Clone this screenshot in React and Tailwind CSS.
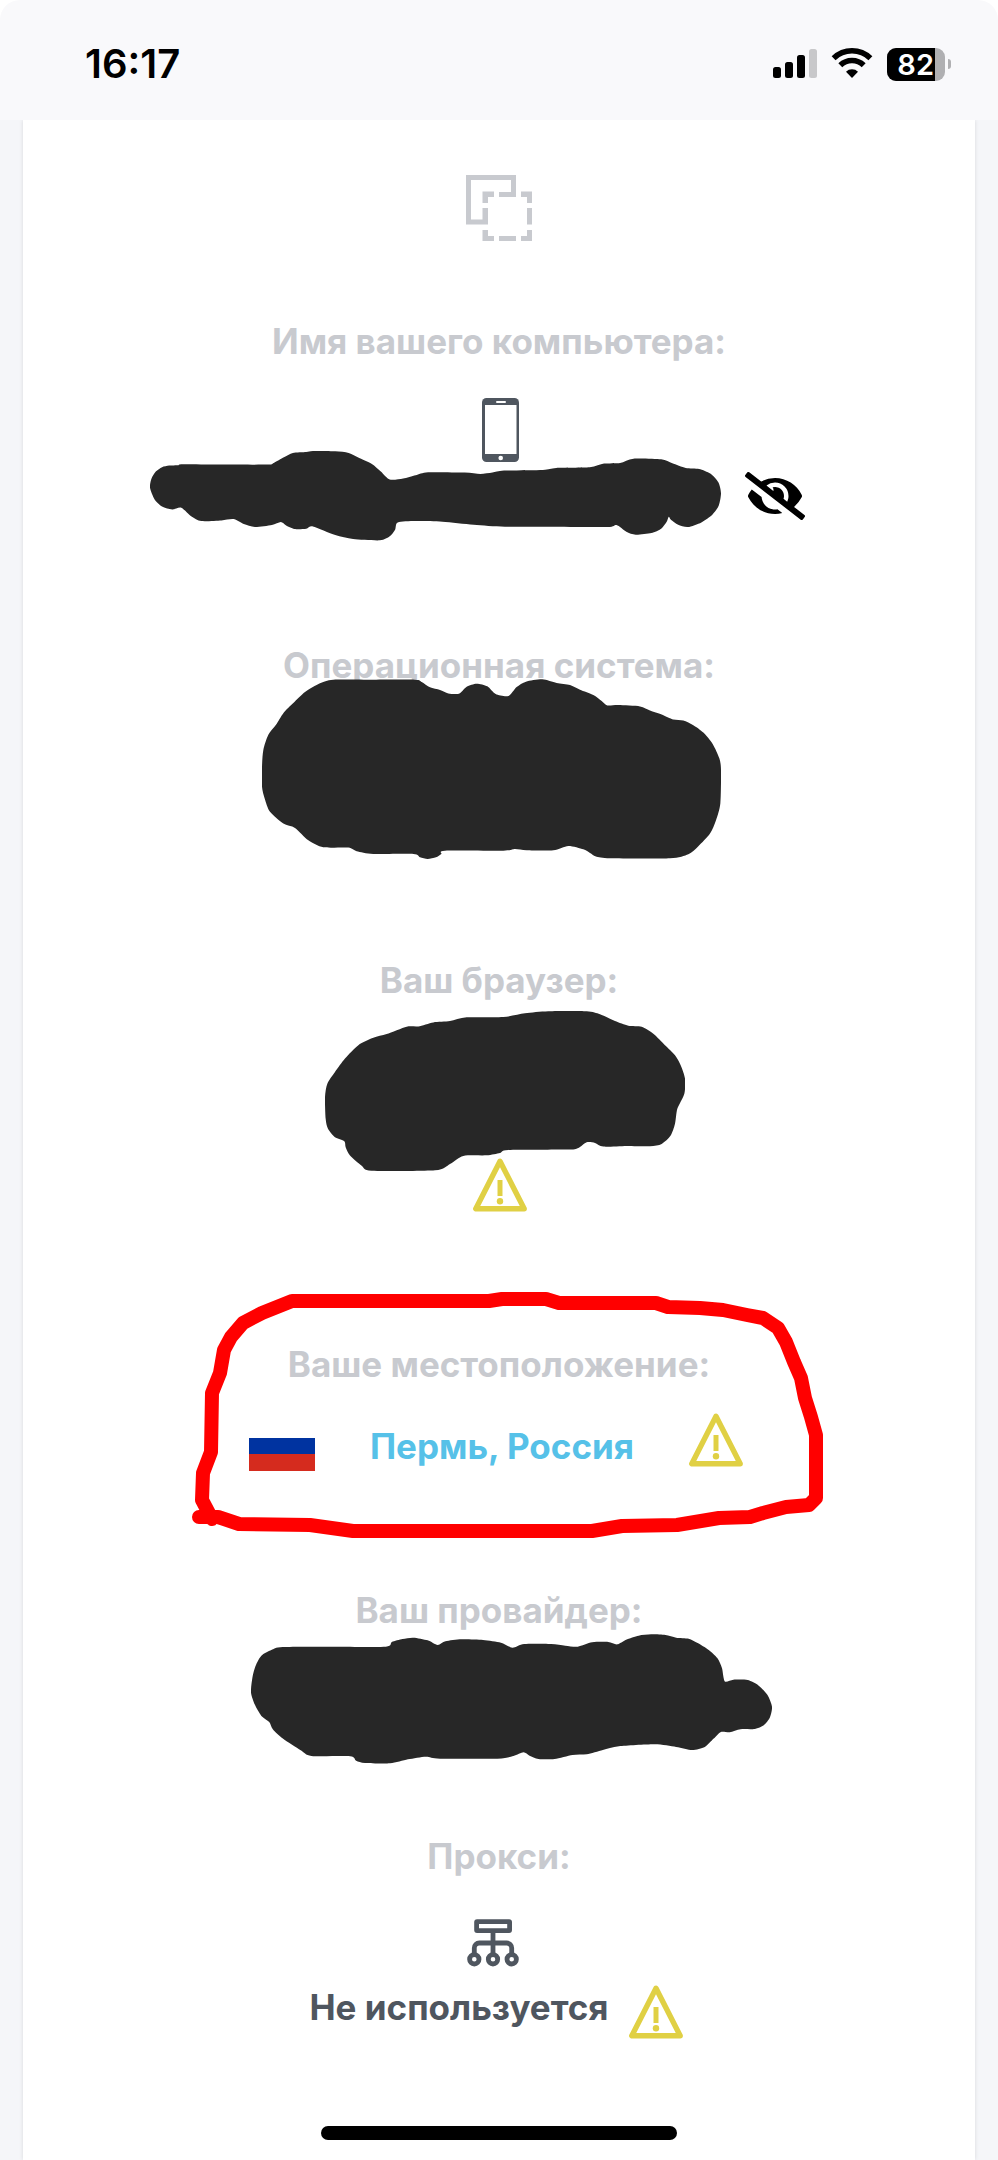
import { FaEyeSlash } from "react-icons/fa";

// Builds a closed smooth curve through a list of points.
function smooth(points) {
  const n = points.length;
  let d = `M${points[0][0]} ${points[0][1]}`;
  for (let i = 0; i < n; i++) {
    const p0 = points[(i - 1 + n) % n];
    const p1 = points[i];
    const p2 = points[(i + 1) % n];
    const p3 = points[(i + 2) % n];
    d += `C${p1[0] + (p2[0] - p0[0]) / 8} ${p1[1] + (p2[1] - p0[1]) / 8} ${p2[0] - (p3[0] - p1[0]) / 8} ${p2[1] - (p3[1] - p1[1]) / 8} ${p2[0]} ${p2[1]}`;
  }
  return d + "Z";
}

const nameMark = [
  [45, 532], [48, 505], [58, 483], [72, 470], [88, 465], [108, 464], [118, 461], [200, 462], [308, 462], [322, 457], [345, 440], [365, 427],
  [395, 424], [410, 421], [460, 422], [490, 427], [515, 443], [542, 460], [562, 483], [582, 507], [612, 504], [640, 494], [668, 485],
  [750, 486], [785, 490], [812, 486], [838, 480], [925, 478], [955, 472], [1030, 470], [1062, 459], [1098, 457], [1128, 444],
  [1190, 446], [1215, 458], [1245, 472], [1275, 475], [1300, 489], [1318, 515], [1324, 548], [1319, 585], [1305, 612],
  [1280, 636], [1250, 650], [1228, 643], [1212, 628], [1207, 619], [1202, 635], [1190, 655], [1168, 668], [1133, 673], [1112, 664], [1090, 644],
  [1070, 650], [950, 649], [840, 649], [770, 643], [700, 634], [640, 632], [600, 636], [594, 658], [582, 678], [560, 690],
  [500, 686], [460, 674], [410, 648], [395, 655], [370, 656], [350, 645], [338, 635], [318, 644], [280, 650], [255, 641],
  [232, 626], [205, 630], [160, 632], [138, 618], [115, 592], [95, 597], [72, 588], [55, 566],
];

const systemMark = [
  [66, 410], [70, 360], [85, 315], [108, 285], [130, 250], [160, 220], [195, 187], [240, 161], [280, 150], [400, 150], [525, 150],
  [545, 157], [570, 173], [600, 181], [625, 191], [657, 192], [680, 171], [710, 162], [742, 170], [767, 193], [805, 199],
  [830, 172], [858, 156], [907, 149], [950, 160], [990, 166], [1020, 180], [1060, 196], [1085, 214], [1102, 227],
  [1135, 226], [1200, 230], [1230, 242], [1265, 254], [1300, 269], [1330, 272], [1360, 286], [1390, 308], [1418, 342], [1438, 385],
  [1443, 420], [1441, 520], [1428, 570], [1410, 610], [1375, 648], [1345, 672], [1290, 684], [1120, 684], [1070, 679],
  [1050, 668], [1030, 657], [985, 647], [940, 660], [860, 660], [825, 656], [790, 661], [615, 661], [604, 671], [588, 681], [563, 686],
  [540, 681], [520, 671], [400, 671], [350, 663], [325, 652], [250, 651], [205, 630], [165, 593], [130, 580], [90, 545], [74, 505], [66, 470],
];

const browserMark = [
  [75, 440], [82, 400], [105, 365], [135, 325], [175, 285], [220, 263], [260, 252], [320, 230], [355, 229], [400, 217],
  [450, 213], [500, 202], [610, 201], [675, 190], [745, 184], [860, 184], [900, 193], [945, 213], [985, 227], [1025, 230],
  [1060, 251], [1095, 285], [1125, 315], [1142, 345], [1155, 385], [1153, 430], [1132, 475], [1125, 520], [1112, 555],
  [1085, 580], [1050, 587], [980, 586], [910, 588], [885, 577], [860, 575], [835, 592], [805, 597], [625, 598], [600, 607],
  [560, 614], [490, 616], [450, 640], [405, 659], [215, 660], [185, 645], [150, 615], [137, 590], [133, 572], [105, 560],
  [84, 535], [77, 505],
];

const providerMark = [
  [61, 335], [65, 290], [74, 255], [90, 225], [118, 208], [150, 199], [300, 198], [438, 198], [455, 184], [485, 175], [515, 171],
  [555, 179], [583, 193], [605, 182], [650, 176], [710, 178], [760, 186], [792, 201], [825, 190], [900, 190], [940, 195],
  [975, 198], [1015, 185], [1060, 184], [1085, 191], [1110, 177], [1145, 165], [1180, 161], [1220, 163], [1250, 171], [1285, 174],
  [1310, 187], [1340, 207], [1365, 232], [1378, 262], [1386, 302], [1410, 297], [1450, 298], [1480, 314], [1505, 342],
  [1518, 378], [1512, 410], [1495, 433], [1470, 444], [1430, 445], [1400, 454], [1375, 453], [1355, 473], [1330, 498],
  [1295, 507], [1250, 498], [1190, 490], [1090, 496], [1045, 507], [1000, 520], [960, 522], [910, 534], [865, 534],
  [840, 524], [823, 514], [795, 525], [750, 533], [590, 533], [550, 527], [500, 535], [450, 547], [380, 546], [355, 539],
  [338, 526], [230, 525], [200, 508], [150, 473], [122, 445], [112, 423], [90, 405], [72, 372],
];

function Mark({ points, box, className }) {
  return (
    <svg viewBox={box} preserveAspectRatio="none" className={`relative z-10 shrink-0 fill-[#272727] ${className}`} aria-hidden="true">
      <path d={smooth(points)} />
    </svg>
  );
}

function Label({ children }) {
  return <h2 className="text-[35px] leading-[40px] font-bold text-[#c8cacf]">{children}</h2>;
}

function Section({ label, className, children }) {
  return (
    <section className={`relative flex w-full flex-col items-center ${className}`}>
      <Label>{label}</Label>
      {children}
    </section>
  );
}

function Warning({ className = "" }) {
  return (
    <svg viewBox="0 0 54 54" className={`h-[54px] w-[54px] shrink-0 ${className}`} role="img" aria-label="Внимание">
      <path d="M27 3.2 2.8 50.8H51.2Z" fill="none" stroke="#e0d044" strokeWidth="5.4" strokeLinejoin="round" />
      <path d="M24.5 22h5v16h-5z" fill="#e0d044" />
      <circle cx="27" cy="43.3" r="3.2" fill="#e0d044" />
    </svg>
  );
}

function CopyIcon() {
  return (
    <svg viewBox="0 0 66 66" className="h-[66px] w-[66px] fill-[#c8cacf]" aria-hidden="true">
      <path d="M0 0H50V22H33V17H45V5H5V44.500H16.500V33H22V49.500H0Z" />
      <path d="M16.500 16.500H28V22H22V28H16.500ZM55 16.500H66V28H61V22H55ZM61 33H66V49.500H61ZM61 55H66V66H55V61H61ZM33 61H50V66H33ZM16.500 55H22V61H28V66H16.500Z" />
    </svg>
  );
}

function PhoneIcon() {
  return (
    <svg viewBox="0 0 37 64" className="h-[64px] w-[37px] shrink-0" aria-hidden="true">
      <rect width="37" height="64" rx="4.500" fill="#4f565f" />
      <rect x="3" y="7" width="31.500" height="49" fill="#fff" />
      <rect x="14" y="3" width="10" height="2" rx="1" fill="#fff" />
      <circle cx="18.700" cy="60" r="2.300" fill="#fff" />
    </svg>
  );
}

function ProxyIcon() {
  return (
    <svg viewBox="0 0 52 48" className="h-[48px] w-[52px]" fill="none" stroke="#4f565f" aria-hidden="true">
      <g strokeWidth="4.800">
        <rect x="9.600" y="2.600" width="33" height="9" rx="0.500" />
        <path d="M26 12V34M7.300 34V29a5 5 0 0 1 5-5H39.700a5 5 0 0 1 5 5V34" />
        <circle cx="7.300" cy="40.300" r="4.700" />
        <circle cx="26" cy="40.300" r="4.700" />
        <circle cx="44.700" cy="40.300" r="4.700" />
      </g>
    </svg>
  );
}

function StatusBar() {
  return (
    <header className="relative z-10 flex h-[120px] w-full shrink-0 items-start justify-between rounded-t-[20px] bg-[#f9f9fb] pt-[42px] pr-[47px] pl-[85px]">
      <time className="text-[40px] leading-[44px] font-semibold text-black">16:17</time>
      <div className="flex items-center gap-[14px] pt-[5px]">
        <svg viewBox="0 0 44 34" className="h-[34px] w-[44px]" role="img" aria-label="Сигнал">
          <rect y="20" width="8" height="11" rx="2.500" />
          <rect x="12" y="15" width="8" height="16" rx="2.500" />
          <rect x="24" y="8" width="8" height="23" rx="2.500" />
          <rect x="36" y="2" width="8" height="29" rx="2.500" fill="#c8c8ca" />
        </svg>
        <svg viewBox="0 0 42 34" className="h-[34px] w-[42px]" role="img" aria-label="Wi-Fi">
          <g fill="none" stroke="#000" strokeWidth="5.600">
            <path d="M2.600 11.200A26.500 26.500 0 0 1 39.400 11.200" />
            <path d="M9.300 18.300A16.800 16.800 0 0 1 32.700 18.300" />
          </g>
          <path d="M21 31 15 24.800A8.500 8.500 0 0 1 27 24.800Z" />
        </svg>
        <div className="flex items-center gap-[3px]">
          <div className="flex h-[33px] w-[58px] overflow-hidden rounded-[9px] bg-[#b0b0b2]">
            <div className="flex w-[48px] items-center justify-end bg-black pr-[1px] text-[29px] leading-[33px] font-semibold text-white">82</div>
          </div>
          <div className="h-[10px] w-[3px] rounded-r-full bg-[#b0b0b2]" />
        </div>
      </div>
    </header>
  );
}

export default function App() {
  return (
    <div className="relative flex min-h-screen flex-col bg-white font-['Inter','Noto_Sans',sans-serif]">
      <StatusBar />
      <div className="flex flex-1 bg-[#f5f6f9] px-[23px]">
        <main className="flex w-full flex-col items-center overflow-hidden bg-white pt-[55px] pb-[120px] shadow-[0_0_4px_rgba(0,0,0,0.12)]">
          <button type="button" aria-label="Копировать">
            <CopyIcon />
          </button>

          <Section label="Имя вашего компьютера:" className="mt-[80px]">
            <div className="mt-[37px] ml-[2px]">
              <PhoneIcon />
            </div>
            <div className="-mt-[11px] flex items-center gap-[24px] pr-[44px]">
              <Mark points={nameMark} box="45 421 1279 271" className="h-[90px] w-[571px]" />
              <button type="button" aria-label="Скрыть" className="text-black">
                <FaEyeSlash className="h-[48px] w-[60px]" />
              </button>
            </div>
          </Section>

          <Section label="Операционная система:" className="mt-[104px]">
            <Mark points={systemMark} box="66 148 1377 538" className="-mt-[6px] mr-[15px] h-[180px] w-[459px]" />
          </Section>

          <Section label="Ваш браузер:" className="mt-[101px]">
            <Mark points={browserMark} box="75 183 1080 478" className="mt-[11px] ml-[11px] h-[160px] w-[360px]" />
            <Warning className="-mt-[13px] ml-[2px]" />
          </Section>

          <Section label="Ваше местоположение:" className="mt-[132px]">
            <div className="mt-[29px] mr-[6px] flex h-[66px] w-[494px] items-center justify-between">
              <svg viewBox="0 0 66 49" className="h-[49px] w-[66px]" role="img" aria-label="Россия">
                <rect width="66" height="17" fill="#fff" />
                <rect y="16" width="66" height="17" fill="#0033a0" />
                <rect y="32" width="66" height="17" fill="#d52b1e" />
              </svg>
              <a href="#location" className="text-[35px] leading-[40px] font-bold text-[#56c1e8]">Пермь, Россия</a>
              <Warning className="self-start" />
            </div>
            <svg
              viewBox="0 0 660 280"
              className="pointer-events-none absolute -top-[74px] left-1/2 h-[280px] w-[660px] -translate-x-[319px]"
              fill="none"
              stroke="#ff0000"
              strokeWidth="14"
              strokeLinecap="round"
              strokeLinejoin="round"
              aria-hidden="true"
            >
              <path d="M32 249 22 230 23 203 31 182 32 123 40 103 44 80 51 67 63 53 82 43 112 31H309L322 29H366L379 33H476L488 37 520 38 543 40 567 45 583 48 598 58 606 72 614 92 621 108 625 128 631 147 636 165V228L629 235 606 237 583 243 570 247 539 248 497 255 442 256 412 261H173L130 255 59 254 38 247H19" />
            </svg>
          </Section>

          <Section label="Ваш провайдер:" className="mt-[111px]">
            <Mark points={providerMark} box="61 160 1457 389" className="mt-[4px] ml-[25px] h-[130px] w-[521px]" />
          </Section>

          <Section label="Прокси:" className="mt-[72px]">
            <div className="mt-[43px] mr-[12px]">
              <ProxyIcon />
            </div>
            <div className="mt-[18px] mr-[6px] flex items-start gap-[20px]">
              <p className="pt-[2px] text-[35px] leading-[40px] font-bold text-[#4f565f]">Не используется</p>
              <Warning />
            </div>
          </Section>
        </main>
      </div>
      <div className="absolute bottom-[20px] left-1/2 h-[14px] w-[356px] -translate-x-1/2 rounded-full bg-black" />
    </div>
  );
}
